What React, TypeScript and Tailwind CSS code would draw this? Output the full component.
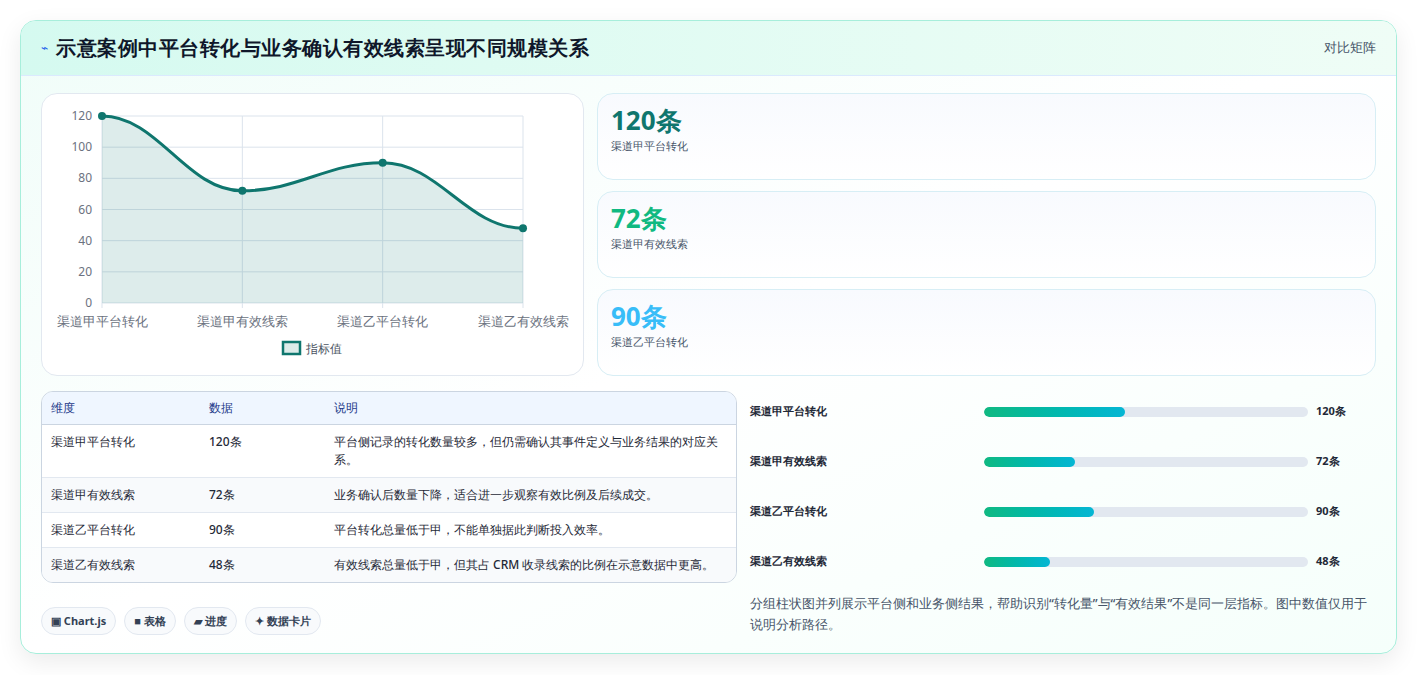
import React from 'react';

const rows = [
  { name: '渠道甲平台转化', value: 120, note: '平台侧记录的转化数量较多，但仍需确认其事件定义与业务结果的对应关系。' },
  { name: '渠道甲有效线索', value: 72, note: '业务确认后数量下降，适合进一步观察有效比例及后续成交。' },
  { name: '渠道乙平台转化', value: 90, note: '平台转化总量低于甲，不能单独据此判断投入效率。' },
  { name: '渠道乙有效线索', value: 48, note: '有效线索总量低于甲，但其占 CRM 收录线索的比例在示意数据中更高。' },
];

const stats = [
  { v: '120条', l: '渠道甲平台转化', c: 'text-[#0f766e]' },
  { v: '72条', l: '渠道甲有效线索', c: 'text-[#10b981]' },
  { v: '90条', l: '渠道乙平台转化', c: 'text-[#38bdf8]' },
];

const LineChart: React.FC = () => {
  const x0 = 60, x1 = 481, yTop = 22, yBot = 209;
  const px = (i: number) => x0 + ((x1 - x0) / 3) * i;
  const py = (v: number) => yBot - (v / 120) * (yBot - yTop);
  const pts = rows.map((r, i) => [px(i), py(r.value)]);
  let d = `M${pts[0][0]},${pts[0][1]}`;
  for (let i = 0; i < pts.length - 1; i++) {
    const [ax, ay] = pts[i], [bx, by] = pts[i + 1];
    const dx = (bx - ax) * 0.4;
    d += ` C${ax + dx},${ay} ${bx - dx},${by} ${bx},${by}`;
  }
  return (
    <svg width="542" height="282" className="block">
      {[0, 20, 40, 60, 80, 100, 120].map(t => (
        <g key={t}>
          <line x1={x0} x2={x1} y1={py(t)} y2={py(t)} stroke="#dbe3ec" />
          <text x={x0 - 10} y={py(t) + 4} textAnchor="end" fontSize="12" fill="#6b7280">{t}</text>
        </g>
      ))}
      {rows.map((r, i) => (
        <g key={r.name}>
          <line x1={px(i)} x2={px(i)} y1={yTop} y2={yBot + 5} stroke="#dbe3ec" />
          <text x={px(i)} y={yBot + 23} textAnchor="middle" fontSize="13" fill="#6b7280">{r.name}</text>
        </g>
      ))}
      <path d={`${d} L${x1},${yBot} L${x0},${yBot} Z`} fill="#0f766e" fillOpacity="0.14" />
      <path d={d} fill="none" stroke="#0f766e" strokeWidth="3" />
      {pts.map(([x, y], i) => <circle key={i} cx={x} cy={y} r="4" fill="#0f766e" />)}
      <rect x="241" y="248" width="17" height="12" fill="#dcebe9" stroke="#0f766e" strokeWidth="2.5" />
      <text x="264" y="259" fontSize="12" fill="#4b5563">指标值</text>
    </svg>
  );
};

export default function App() {
  return (
    <div className="min-h-[675px] bg-white p-5 font-['Noto_Sans_CJK_SC','Noto_Sans',sans-serif]">
      <div className="rounded-2xl border border-[#a7eedb] bg-gradient-to-br from-[#f0fdf9] via-white to-[#f5fffb] shadow-[0_8px_24px_rgba(0,0,0,0.08)] overflow-hidden">
        <div className="h-[55px] flex items-center justify-between px-5 bg-gradient-to-r from-[#d5faf0] to-[#effdf6] border-b border-[#dbeafe]">
          <div className="flex items-center gap-2">
            <span className="text-[#2563eb] text-xs">⌁</span>
            <h1 className="text-[20px] font-bold text-[#0f172a] tracking-[0.5px]">示意案例中平台转化与业务确认有效线索呈现不同规模关系</h1>
          </div>
          <span className="text-[13px] text-[#475569]">对比矩阵</span>
        </div>
        <div className="px-5 pt-[17px] pb-[18px]">
          <div className="flex gap-[13px]">
            <div className="w-[543px] h-[283px] rounded-2xl border border-[#e2e8f0] bg-white overflow-hidden">
              <LineChart />
            </div>
            <div className="flex-1 flex flex-col gap-[11px]">
              {stats.map(s => (
                <div key={s.l} className="h-[87px] rounded-2xl border border-[#d7eef5] bg-gradient-to-b from-[#f8fafe] to-white px-[13px] pt-[8px]">
                  <div className={`text-[26px] font-bold leading-[36px] ${s.c}`}>{s.v}</div>
                  <div className="text-[11px] text-[#475569] font-medium">{s.l}</div>
                </div>
              ))}
            </div>
          </div>
          <div className="flex gap-[13px] mt-[15px]">
            <div className="w-[696px]">
              <div className="rounded-xl border border-[#cbd5e1] overflow-hidden text-[12px] text-[#1f2937] font-medium">
                <div className="flex h-[33px] items-center bg-[#eff6ff] border-b border-[#cbd5e1] text-[#1e3a8a]">
                  <div className="w-[167px] pl-[9px]">维度</div>
                  <div className="w-[125px]">数据</div>
                  <div className="flex-1">说明</div>
                </div>
                {rows.map((r, i) => (
                  <div key={r.name} className={`flex py-[8px] leading-[18px] ${i % 2 ? 'bg-[#f8fafc]' : 'bg-white'} ${i < 3 ? 'border-b border-[#e2e8f0]' : ''}`}>
                    <div className="w-[167px] pl-[9px]">{r.name}</div>
                    <div className="w-[125px]">{r.value}条</div>
                    <div className="flex-1 pr-[14px]">{r.note}</div>
                  </div>
                ))}
              </div>
              <div className="flex gap-2 mt-6 text-[11px] font-bold text-[#334155]">
                {['▣ Chart.js', '■ 表格', '▰ 进度', '✦ 数据卡片'].map(t => (
                  <span key={t} className="h-[28px] flex items-center px-[9px] rounded-full border border-[#e2e8f0] bg-[#f8fafc]">{t}</span>
                ))}
              </div>
            </div>
            <div className="flex-1">
              <div className="flex flex-col gap-[37px] pt-[14px]">
                {rows.map(r => (
                  <div key={r.name} className="flex items-center h-[13px] text-[11px] font-bold text-[#1f2937]">
                    <div className="w-[234px]">{r.name}</div>
                    <div className="w-[324px] h-[10px] rounded-full bg-[#e2e8f0] overflow-hidden">
                      <div className="h-full rounded-full bg-gradient-to-r from-[#10b981] to-[#06b6d4]" style={{ width: `${17 + r.value * 1.03}px` }} />
                    </div>
                    <div className="ml-2">{r.value}条</div>
                  </div>
                ))}
              </div>
              <p className="mt-[25px] text-[12.5px] leading-[21px] text-[#475569] font-medium pr-1">分组柱状图并列展示平台侧和业务侧结果，帮助识别“转化量”与“有效结果”不是同一层指标。图中数值仅用于说明分析路径。</p>
            </div>
          </div>
        </div>
      </div>
    </div>
  );
}
